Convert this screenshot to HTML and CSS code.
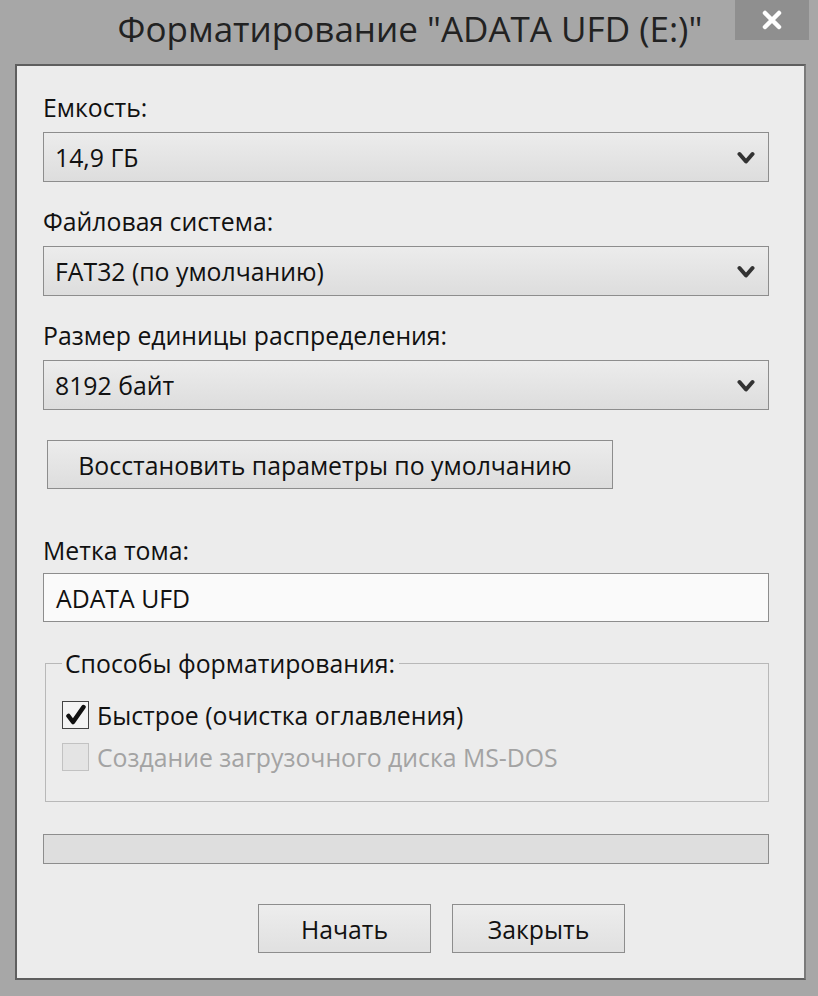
FILE: index.html
```html
<!DOCTYPE html>
<html lang="ru">
<head>
<meta charset="utf-8">
<title>Форматирование</title>
<link rel="stylesheet" href="styles.css">
</head>
<body>
<div class="window">
  <div class="titlebar">
    <div class="title">Форматирование "ADATA UFD (E:)"</div>
    <div class="close">
      <svg width="22" height="20" viewBox="0 0 22 20"><path d="M4 3 L18 17 M18 3 L4 17" stroke="#fff" stroke-width="4.5" stroke-linecap="round"/></svg>
    </div>
  </div>
  <div class="client">
    <div class="label first">Емкость:</div>
    <div class="combo"><span>14,9 ГБ</span><svg class="chev" width="18" height="14" viewBox="0 0 18 14"><path d="M2.5 3 L9 10.5 L15.5 3" fill="none" stroke="#333" stroke-width="4" stroke-linejoin="round" stroke-linecap="round"/></svg></div>
    <div class="label">Файловая система:</div>
    <div class="combo"><span>FAT32 (по умолчанию)</span><svg class="chev" width="18" height="14" viewBox="0 0 18 14"><path d="M2.5 3 L9 10.5 L15.5 3" fill="none" stroke="#333" stroke-width="4" stroke-linejoin="round" stroke-linecap="round"/></svg></div>
    <div class="label">Размер единицы распределения:</div>
    <div class="combo"><span>8192 байт</span><svg class="chev" width="18" height="14" viewBox="0 0 18 14"><path d="M2.5 3 L9 10.5 L15.5 3" fill="none" stroke="#333" stroke-width="4" stroke-linejoin="round" stroke-linecap="round"/></svg></div>
    <div class="restore">Восстановить параметры по умолчанию</div>
    <div class="label vol">Метка тома:</div>
    <div class="input">ADATA UFD</div>
    <fieldset class="group">
      <legend>Способы форматирования:</legend>
      <div class="check">
        <span class="box"><svg width="22" height="22" viewBox="0 0 22 22"><path d="M3.5 12 L8 18 L18.5 3" fill="none" stroke="#111" stroke-width="4.5" stroke-linejoin="round" stroke-linecap="round"/></svg></span>
        <span>Быстрое (очистка оглавления)</span>
      </div>
      <div class="check disabled">
        <span class="box"></span>
        <span>Создание загрузочного диска MS-DOS</span>
      </div>
    </fieldset>
    <div class="progress"></div>
    <div class="buttons">
      <div class="btn">Начать</div>
      <div class="btn">Закрыть</div>
    </div>
  </div>
</div>
</body>
</html>
```
FILE: styles.css
```css
* { box-sizing: border-box; }
html, body { margin: 0; padding: 0; }
body {
  width: 818px;
  height: 996px;
  background: #a7a7a7;
  font-family: "Open Sans", "Noto Sans", sans-serif;
  color: #111;
  overflow: hidden;
}
.window {
  display: flex;
  flex-direction: column;
  height: 996px;
}
.titlebar {
  height: 64px;
  display: flex;
  position: relative;
}
.title {
  flex: 1;
  text-align: center;
  font-size: 35px;
  line-height: 34px;
  padding-top: 12px;
  padding-left: 2px;
  color: #222;
}
.close {
  position: absolute;
  left: 735px;
  top: 0;
  width: 74px;
  height: 40px;
  background: #8f8f8f;
  display: flex;
  align-items: center;
  justify-content: center;
}
.client {
  margin: 0 12px 0 15px;
  height: 916px;
  background: #ececec;
  border: 2px solid #5e5e5e;
  border-right-color: #7a7a7a;
  padding: 27px 35px 0 26px;
  display: flex;
  flex-direction: column;
  align-items: flex-start;
  font-size: 24.8px;
  font-weight: 500;
}
.label {
  line-height: 28px;
  height: 28px;
  margin-top: 25px;
  margin-bottom: 11px;
}
.label.first { margin-top: 0; }
.combo {
  width: 726px;
  height: 50px;
  border: 1.5px solid #8d8d8d;
  background: linear-gradient(#ececec, #dddddd);
  display: flex;
  align-items: center;
  justify-content: space-between;
  padding: 0 13px 0 11px;
}
.chev { margin-top: 1px; }
.restore {
  margin-top: 30px;
  margin-left: 4px;
  width: 566px;
  height: 49px;
  border: 1.5px solid #8d8d8d;
  background: linear-gradient(#ececec, #dddddd);
  display: flex;
  align-items: center;
  justify-content: center;
  padding-right: 10px;
}
.label.vol { margin-top: 47px; margin-bottom: 9px; }
.input {
  width: 726px;
  height: 49px;
  border: 1.5px solid #8d8d8d;
  background: #fafafa;
  display: flex;
  align-items: center;
  padding-left: 12px;
}
.group {
  margin: 27px 0 0 2px;
  width: 724px;
  height: 153px;
  border: 1px solid #b8b8b8;
  padding: 0 0 0 16px;
}
.group legend {
  padding: 0 4px 0 3px;
  margin-left: 0;
  line-height: 28px;
}
.check {
  display: flex;
  align-items: center;
  gap: 8px;
  height: 28px;
  margin-top: 24px;
}
.check + .check { margin-top: 14px; }
.box {
  width: 27px;
  height: 28px;
  border: 1.5px solid #444;
  background: #f4f4f4;
  display: flex;
  align-items: center;
  justify-content: center;
}
.check.disabled { color: #a3a3a3; }
.check.disabled .box { border-color: #c2c2c2; background: #e4e4e4; }
.progress {
  margin-top: 32px;
  width: 726px;
  height: 30px;
  border: 1.5px solid #8d8d8d;
  background: #dedede;
}
.buttons {
  margin-top: 40px;
  align-self: stretch;
  display: flex;
  gap: 21px;
  padding-left: 215px;
}
.btn {
  width: 173px;
  height: 49px;
  border: 1.5px solid #8d8d8d;
  background: linear-gradient(#ededed, #e0e0e0);
  display: flex;
  align-items: center;
  justify-content: center;
}
```
